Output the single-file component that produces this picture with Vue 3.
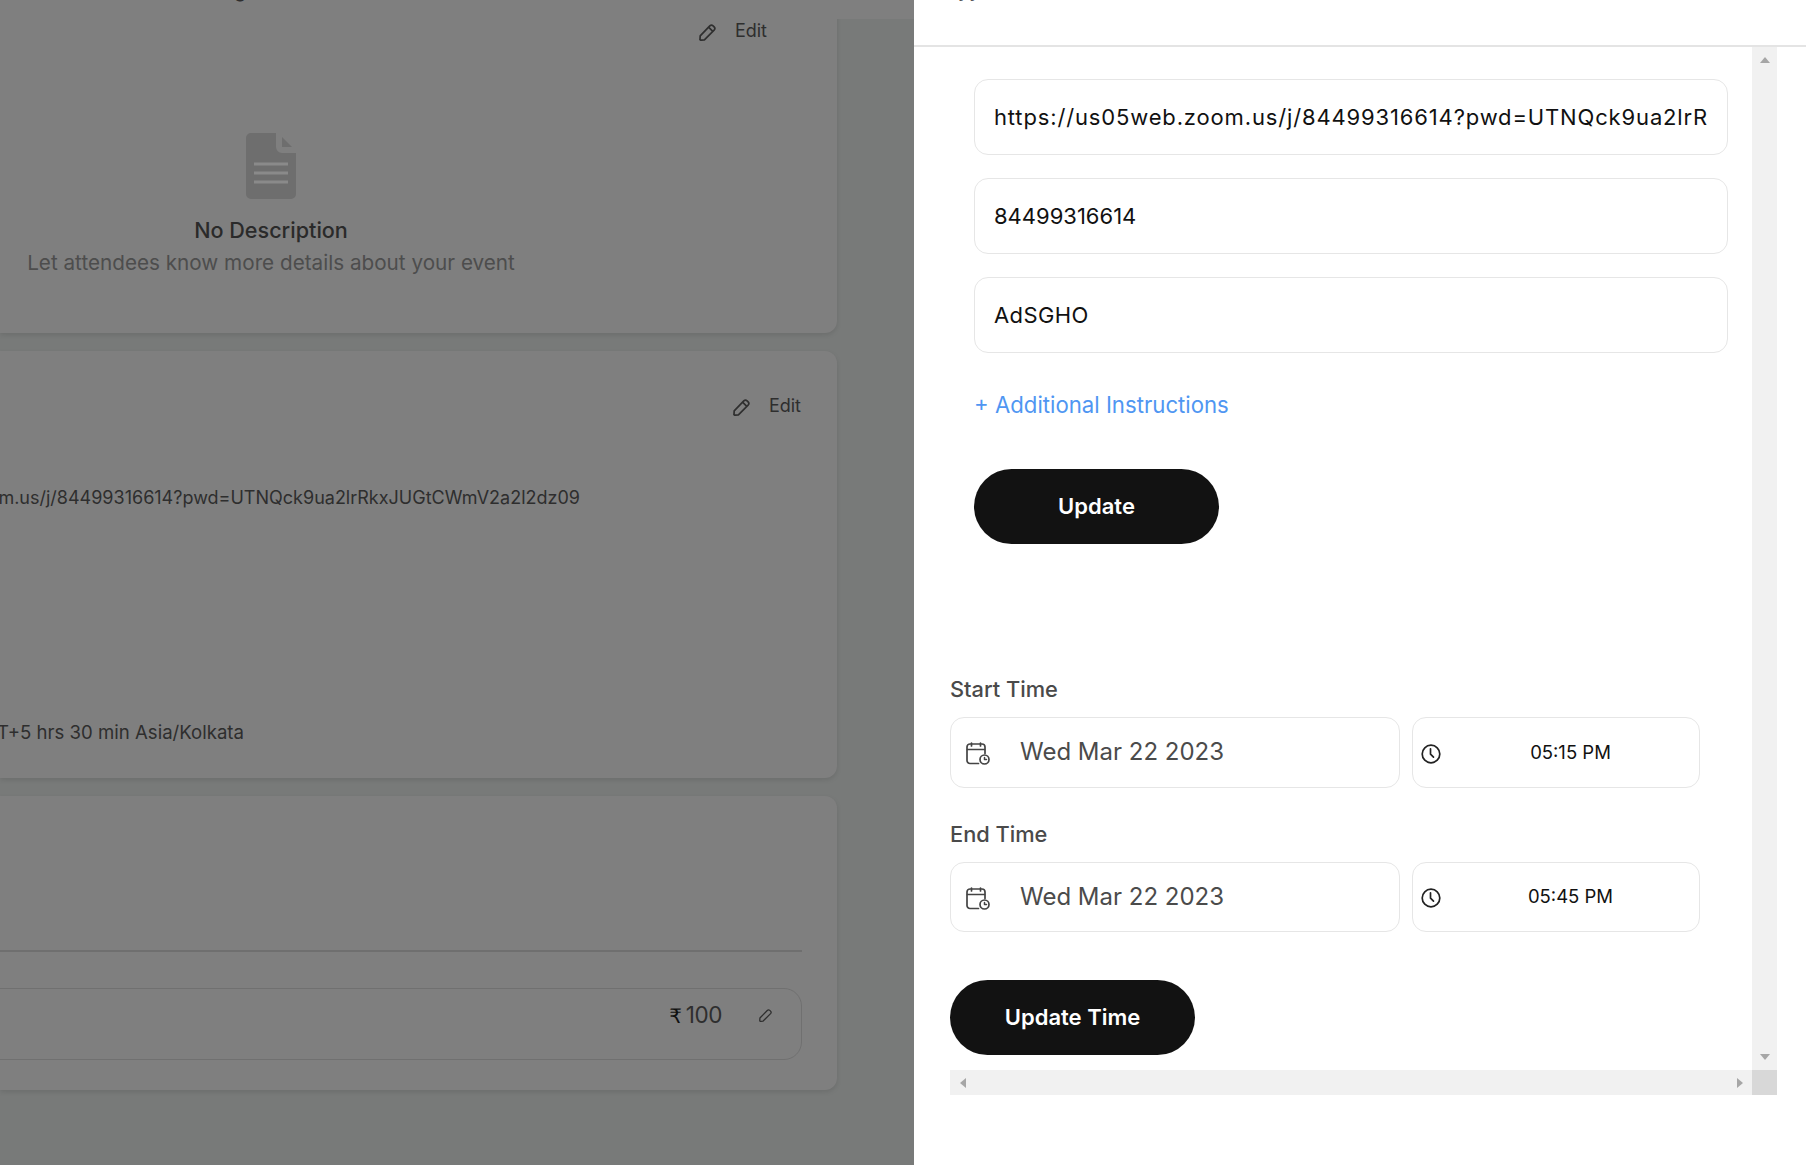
<script setup>
const fields = [
  { id: 'url', value: 'https://us05web.zoom.us/j/84499316614?pwd=UTNQck9ua2lrRkxJUGtCWmV2a2l2dz09' },
  { id: 'meeting', value: '84499316614' },
  { id: 'code', value: 'AdSGHO' }
]
const times = [
  { label: 'Start Time', date: 'Wed Mar 22 2023', time: '05:15 PM' },
  { label: 'End Time', date: 'Wed Mar 22 2023', time: '05:45 PM' }
]
</script>

<template>
  <div class="page">
    <div class="behind">
      <span class="cut-title">g</span>
      <div class="cards">
        <section class="card card-desc">
          <div class="edit edit-desc">
            <svg class="pencil" width="17" height="17" viewBox="0 0 17 17" fill="none" stroke="#2f2f2f" stroke-width="1.700" stroke-linejoin="round"><path d="M1.200 11.800 10.800 1.900a2.400 2.400 0 0 1 3.300-.1l1 1a2.400 2.400 0 0 1 0 3.300l-9.700 9.700-3.500.4a.9.900 0 0 1-.9-1z"/><path d="m9.500 3.200 4.300 4.200"/></svg>
            <span>Edit</span>
          </div>
          <div class="empty">
            <svg class="doc" width="50" height="66" viewBox="0 0 50 66">
              <path fill="#6e6e6e" d="M5 0h25v14a6 6 0 0 0 6 6h14v41a5 5 0 0 1-5 5H5a5 5 0 0 1-5-5V5a5 5 0 0 1 5-5z"/>
              <path fill="#6e6e6e" d="m36 4 10 10H36z"/>
              <path fill="#8a8a8a" d="M8 29.500h34v3H8zM8 38.500h34v3H8zM8 47.500h34v3H8z"/>
            </svg>
            <h3 class="empty-title">No Description</h3>
            <p class="empty-text">Let attendees know more details about your event</p>
          </div>
        </section>

        <section class="card card-link">
          <div class="edit edit-link">
            <svg class="pencil" width="17" height="17" viewBox="0 0 17 17" fill="none" stroke="#2f2f2f" stroke-width="1.700" stroke-linejoin="round"><path d="M1.200 11.800 10.800 1.900a2.400 2.400 0 0 1 3.300-.1l1 1a2.400 2.400 0 0 1 0 3.300l-9.700 9.700-3.500.4a.9.900 0 0 1-.9-1z"/><path d="m9.500 3.200 4.300 4.200"/></svg>
            <span>Edit</span>
          </div>
          <div class="tail-line tail-url">https://us05web.zoom.us/j/84499316614?pwd=UTNQck9ua2lrRkxJUGtCWmV2a2l2dz09</div>
          <div class="tail-line tail-zone">GMT+5 hrs 30 min Asia/Kolkata</div>
        </section>

        <section class="card card-ticket">
          <div class="divider"></div>
          <div class="ticket">
            <span class="price"><span class="rupee">₹</span>100</span>
            <svg width="13" height="13" viewBox="0 0 17 17" fill="none" stroke="#2f2f2f" stroke-width="1.700" stroke-linejoin="round"><path d="M1.200 11.800 10.800 1.900a2.400 2.400 0 0 1 3.300-.1l1 1a2.400 2.400 0 0 1 0 3.300l-9.700 9.700-3.500.4a.9.900 0 0 1-.9-1z"/></svg>
          </div>
        </section>
      </div>
      <div class="band"></div>
    </div>

    <aside class="panel">
      <header class="panel-head"><span class="cut-head">yy</span></header>
      <div class="frame">
        <div class="content">
          <div class="link-form">
            <input v-for="f in fields" :key="f.id" class="field" :class="'field-' + f.id" :value="f.value" readonly />
            <a class="add-link">+ Additional Instructions</a>
            <button class="pill pill-update" type="button">Update</button>
          </div>

          <div class="schedule">
            <div v-for="t in times" :key="t.label" class="time-block">
              <label class="time-label">{{ t.label }}</label>
              <div class="time-row">
                <div class="box box-date">
                  <svg class="cal" width="24" height="23" viewBox="0 0 24 23" fill="none" stroke="#444" stroke-width="1.700" stroke-linecap="round" stroke-linejoin="round">
                    <path d="M12.500 21.500H4a3 3 0 0 1-3-3V5a3 3 0 0 1 3-3h12a3 3 0 0 1 3 3v6.500"/>
                    <path d="M1.500 7.500h17M5.500 1v3M14.500 1v3"/>
                    <circle cx="18.500" cy="17.500" r="4.500"/>
                    <path d="M18.500 15.500v2h2" stroke-width="1.500"/>
                  </svg>
                  <span class="date-text">{{ t.date }}</span>
                </div>
                <div class="box box-time">
                  <svg class="clock" width="20" height="20" viewBox="0 0 20 20" fill="none" stroke="#222" stroke-width="1.700" stroke-linecap="round" stroke-linejoin="round">
                    <circle cx="10" cy="10" r="8.800"/>
                    <path d="M9.500 4.800v5.400l3 3"/>
                  </svg>
                  <span class="time-text">{{ t.time }}</span>
                </div>
              </div>
            </div>
          </div>

          <button class="pill pill-time" type="button">Update Time</button>
        </div>

        <div class="vbar">
          <svg width="12" height="8" viewBox="0 0 12 8"><path d="M6 1 11 7H1z" fill="#a6a6a6"/></svg>
          <svg width="12" height="8" viewBox="0 0 12 8"><path d="M6 7 1 1h10z" fill="#a6a6a6"/></svg>
        </div>
        <div class="hbar">
          <svg width="8" height="12" viewBox="0 0 8 12"><path d="M1 6 7 1v10z" fill="#a6a6a6"/></svg>
          <svg width="8" height="12" viewBox="0 0 8 12"><path d="M7 6 1 1v10z" fill="#a6a6a6"/></svg>
        </div>
        <div class="corner"></div>
      </div>
    </aside>
  </div>
</template>

<style>
html, body { margin: 0; padding: 0; background: #787a79; }
</style>

<style scoped>
.page {
  display: flex;
  width: 1806px;
  height: 1165px;
  overflow: hidden;
  font-family: Inter, "Noto Sans", sans-serif;
}
.behind {
  position: relative;
  flex: 0 0 914px;
  display: flex;
  align-items: flex-start;
  background: #787a79;
  color: #2e2e2e;
  overflow: hidden;
}
.cut-title {
  position: absolute;
  left: 234px;
  top: -22px;
  font-size: 20px;
  line-height: 24px;
  color: #2e2e2e;
}
.cards {
  flex: 0 0 837px;
  width: 837px;
  min-width: 0;
  display: flex;
  flex-direction: column;
  gap: 18px;
}
.band {
  flex: 1;
  height: 19px;
  background: #7f7f7f;
}
.card {
  min-width: 0;
  background: #7f7f7f;
  border-radius: 0 12px 12px 0;
  box-shadow: 0 2px 5px rgba(0, 0, 0, .1);
  overflow: hidden;
}
.card-desc { height: 333px; padding-top: 19px; box-sizing: border-box; border-top-right-radius: 0; }
.card-link { height: 427px; padding-top: 43px; box-sizing: border-box; }
.card-ticket { height: 294px; padding-top: 154px; box-sizing: border-box; }
.edit {
  display: flex;
  align-items: center;
  justify-content: flex-end;
  gap: 19px;
  font-size: 18px;
  line-height: 24px;
}
.edit-desc { padding-right: 70px; }
.edit-link { padding-right: 36px; }
.pencil { flex: none; margin-top: 3px; }
.empty {
  width: 542px;
  display: flex;
  flex-direction: column;
  align-items: center;
  margin-top: 90px;
}
.doc { display: block; }
.empty-title {
  margin: 16px 0 0;
  font-size: 21.600px;
  line-height: 30px;
  font-weight: 500;
  color: #2a2a2a;
}
.empty-text {
  margin: 3px 0 0;
  font-size: 20.700px;
  line-height: 30px;
  color: #4d4d4d;
  white-space: nowrap;
}
.tail-line {
  display: flex;
  justify-content: flex-end;
  white-space: nowrap;
  font-size: 18px;
  line-height: 28px;
  color: #2e2e2e;
}
.tail-url { margin-top: 66px; padding-right: 257px; }
.tail-zone { margin-top: 206px; padding-right: 593px; font-size: 18.600px; }
.divider {
  height: 2px;
  margin-left: -20px;
  margin-right: 35px;
  background: #6f6f6f;
}
.ticket {
  box-sizing: border-box;
  height: 72px;
  margin: 36px 35px 0 -20px;
  padding: 11px 29px 0 0;
  display: flex;
  justify-content: flex-end;
  align-items: flex-start;
  gap: 37px;
  border: 1px solid #707070;
  border-radius: 18px;
}
.ticket svg { margin-top: 9px; }
.price {
  display: flex;
  align-items: baseline;
  gap: 4px;
  font-size: 22.500px;
  letter-spacing: -.4px;
  line-height: 30px;
  color: #2e2e2e;
}
.rupee { color: #111; font-family: "DejaVu Sans", sans-serif; font-size: 20px; }

.panel {
  flex: 1;
  background: #fff;
  display: flex;
  flex-direction: column;
  position: relative;
}
.panel-head {
  height: 45px;
  border-bottom: 2px solid #e4e4e4;
  flex: none;
  overflow: hidden;
  position: relative;
}
.cut-head {
  position: absolute;
  left: 44px;
  top: -22px;
  font-size: 20px;
  line-height: 24px;
  color: #555;
}
.frame {
  margin-left: 36px;
  width: 827px;
  display: grid;
  grid-template-columns: 802px 25px;
  grid-template-rows: 1023px 25px;
}
.content {
  box-sizing: border-box;
  padding-top: 32px;
  min-width: 0;
}
.link-form {
  padding-left: 24px;
  display: flex;
  flex-direction: column;
  align-items: flex-start;
}
.field {
  box-sizing: border-box;
  width: 754px;
  height: 76px;
  margin-bottom: 23px;
  padding: 0 20px 0 19px;
  border: 1px solid #e6e6e6;
  border-radius: 14px;
  font: 400 22px Inter, "Noto Sans", sans-serif;
  color: #111;
  background: #fff;
  outline: none;
}
.field-url { letter-spacing: .85px; }
.field-code { letter-spacing: .4px; }
.add-link {
  margin-top: 14px;
  font-size: 22.200px;
  line-height: 30px;
  color: #4f96f2;
}
.pill {
  display: block;
  box-sizing: border-box;
  border: 0;
  background: #121212;
  color: #fff;
  font: 600 22px Inter, "Noto Sans", sans-serif;
  border-radius: 38px;
  padding: 0 0 2px;
}
.pill-update { width: 245px; height: 75px; margin-top: 49px; }
.pill-time { width: 245px; height: 75px; margin-top: 48px; }
.schedule { margin-top: 130px; }
.time-block + .time-block { margin-top: 31px; }
.time-label {
  display: block;
  font-size: 21.800px;
  line-height: 30px;
  font-weight: 500;
  color: #4a4a4a;
}
.time-row {
  display: flex;
  gap: 12px;
  margin-top: 13px;
}
.box {
  box-sizing: border-box;
  display: flex;
  align-items: center;
  height: 71px;
  border: 1px solid #e6e6e6;
  border-radius: 14px;
  background: #fff;
}
.time-block + .time-block .box { height: 70px; }
.box-date { width: 450px; padding-left: 15px; }
.box-time { width: 288px; padding-left: 8px; }
.cal { margin-top: 2px; flex: none; }
.clock { margin-top: 2px; flex: none; }
.date-text {
  margin-left: 30px;
  font-size: 24px;
  color: #4b4b4b;
  white-space: nowrap;
  margin-top: -2px;
}
.time-text {
  flex: 1;
  text-align: center;
  font-size: 18.500px;
  color: #111;
  margin-top: -2px;
  padding-left: 1px;
}
.vbar {
  background: #f1f1f1;
  display: flex;
  flex-direction: column;
  align-items: center;
  justify-content: space-between;
  padding: 9px 0;
  box-sizing: border-box;
}
.vbar svg { display: block; }
.hbar {
  background: #f1f1f1;
  display: flex;
  align-items: center;
  justify-content: space-between;
  padding: 0 8px 0 9px;
}
.corner { background: #d8d8d8; }
</style>
